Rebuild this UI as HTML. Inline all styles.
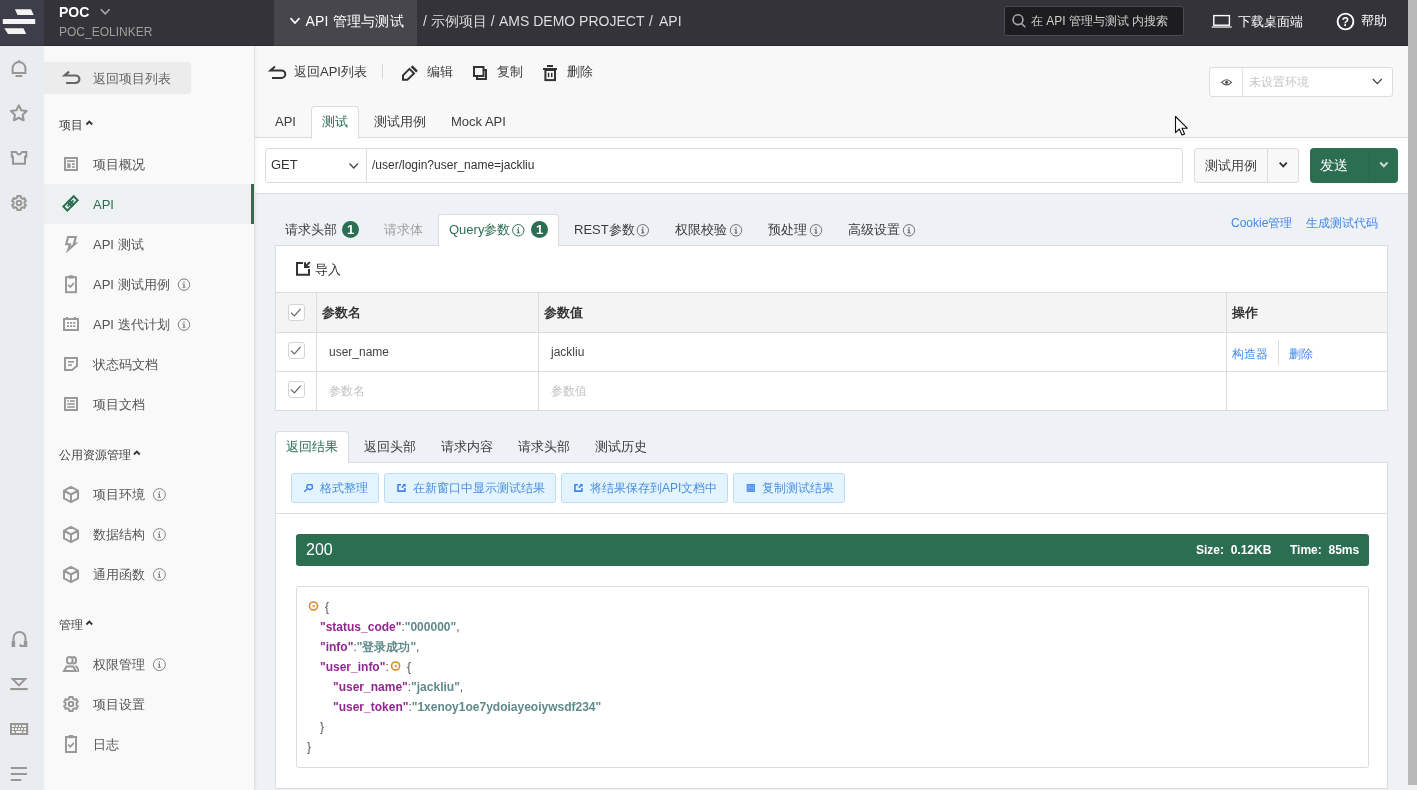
<!DOCTYPE html>
<html><head><meta charset="utf-8">
<style>
*{box-sizing:border-box;margin:0;padding:0}
html,body{width:1417px;height:790px;overflow:hidden;background:#eef1f5}
body{will-change:transform;font-family:"Liberation Sans",sans-serif;color:#333;position:relative;font-size:14px}
.a{position:absolute;white-space:nowrap}
.t{position:absolute;white-space:nowrap;line-height:20px;height:20px}
svg{position:absolute;overflow:visible}
/* top bar */
#top{left:0;top:0;width:1408px;height:46px;background:#34333a;border-bottom:1px solid #2b2a30}
#logo{left:0;top:0;width:44px;height:46px;background:#3e3e4a;border-bottom:1px solid #33333d}
#mod{left:274px;top:0;width:143px;height:46px;background:#47464c;border-bottom:1px solid #3a393e}
#search{left:1004px;top:6px;width:180px;height:30px;background:#1d1d20;border:1px solid #4b4a50;border-radius:3px}
/* rail + sidebar */
#rail{left:0;top:46px;width:44px;height:744px;background:#e9edf2}
#side{left:44px;top:46px;width:211px;height:744px;background:#f9f9f9;border-right:1px solid #e3e3e3}
#back{left:44px;top:62px;width:147px;height:32px;background:#ececec;border-radius:0 4px 4px 0}
#act{left:44px;top:184px;width:210px;height:40px;background:#eef1f1;border-right:3px solid #24754f}
.si{font-size:13px;color:#555;left:93px}
.sh{font-size:12px;color:#444;left:59px}
/* main */
#mtop{left:255px;top:46px;width:1153px;height:92px;background:#f8f8f8;border-bottom:1px solid #dcdcdc}
#murl{left:255px;top:138px;width:1153px;height:56px;background:#fff;border-bottom:1px solid #d9dcdf}
#sb{left:1408px;top:0;width:9px;height:785px;background:#bab9b9}
#sbt{left:1408px;top:785px;width:9px;height:5px;background:#f1f1f1}
.tb{font-size:13px;color:#3c3c3c}
.box{border:1px solid #dcdcdc;background:#fff}
.lnk{font-size:12px;color:#4289ea}
.th{font-size:13px;font-weight:bold;color:#333}
.td{font-size:12px;color:#444}
.ph{font-size:12px;color:#c4c4c4}
.cb{width:17px;height:17px;border:1px solid #d4d4d4;border-radius:3px;background:#fff}
.bb{height:30px;top:473px;background:#e3f4fe;border:1px solid #bcdcfa;border-radius:3px;font-size:12px;color:#4a90e2;line-height:28px}
.j{font-size:12px;font-weight:bold;line-height:20px;height:20px}
.k{color:#92278f}.s{color:#5f8a8b}.p{color:#555;font-weight:normal}
.badge{width:17px;height:17px;border-radius:9px;background:#2b6e51;color:#fff;font-size:13px;font-weight:bold;text-align:center;line-height:17px}
</style></head><body>
<!-- TOP BAR -->
<div class="a" id="top"></div>
<div class="a" id="logo"></div>
<div class="a" id="mod"></div>
<div class="t" style="left:59px;top:2px;font-size:14px;font-weight:bold;color:#fff">POC</div>
<div class="t" style="left:59px;top:22px;font-size:12px;color:#a29f9b">POC_EOLINKER</div>
<div class="t" style="left:305.5px;top:11px;font-size:14px;letter-spacing:.2px;color:#fff">API 管理与测试</div>
<div class="t" style="left:423px;top:11px;font-size:14px;color:#dedede">/ 示例项目 /</div>
<div class="t" style="left:499px;top:11px;font-size:14px;color:#dedede">AMS DEMO PROJECT</div>
<div class="t" style="left:649px;top:11px;font-size:14px;color:#dedede">/</div>
<div class="t" style="left:659px;top:11px;font-size:14px;color:#dedede">API</div>
<div class="a" id="search"></div>
<div class="t" style="left:1031px;top:11px;font-size:12px;color:#cfcfcf">在 API 管理与测试 内搜索</div>
<div class="t" style="left:1238px;top:12px;font-size:13px;color:#fff">下载桌面端</div>
<div class="t" style="left:1361px;top:11px;font-size:13px;color:#fff">帮助</div>
<!-- RAIL / SIDEBAR -->
<div class="a" id="rail"></div>
<div class="a" id="side"></div>
<div class="a" id="back"></div>
<div class="t" style="left:93px;top:69px;font-size:13px;color:#666">返回项目列表</div>
<div class="a" id="act"></div>
<div class="t sh" style="top:115px">项目</div>
<div class="t si" style="top:155px">项目概况</div>
<div class="t si" style="top:195px;color:#2b6e51">API</div>
<div class="t si" style="top:235px">API 测试</div>
<div class="t si" style="top:275px">API 测试用例</div>
<div class="t si" style="top:315px">API 迭代计划</div>
<div class="t si" style="top:355px">状态码文档</div>
<div class="t si" style="top:395px">项目文档</div>
<div class="t sh" style="top:445px">公用资源管理</div>
<div class="t si" style="top:485px">项目环境</div>
<div class="t si" style="top:525px">数据结构</div>
<div class="t si" style="top:565px">通用函数</div>
<div class="t sh" style="top:615px">管理</div>
<div class="t si" style="top:655px">权限管理</div>
<div class="t si" style="top:695px">项目设置</div>
<div class="t si" style="top:735px">日志</div>
<!-- MAIN TOP -->
<div class="a" style="left:255px;top:46px;width:4px;height:744px;background:linear-gradient(to right,rgba(0,0,0,.035),rgba(0,0,0,0));z-index:4"></div>
<div class="a" id="mtop"></div>
<div class="a" id="murl"></div>
<div class="t tb" style="left:294px;top:62px">返回API列表</div>
<div class="a" style="left:382px;top:64px;width:1px;height:15px;background:#d8d8d8"></div>
<div class="t tb" style="left:427px;top:62px">编辑</div>
<div class="t tb" style="left:497px;top:62px">复制</div>
<div class="t tb" style="left:567px;top:62px">删除</div>
<div class="a box" style="left:1209px;top:67px;width:184px;height:30px;border-radius:3px"></div>
<div class="a" style="left:1242px;top:68px;width:1px;height:28px;background:#e4e4e4"></div>
<div class="t" style="left:1249px;top:72px;font-size:12px;color:#c6c6c6">未设置环境</div>
<!-- tabs -->
<div class="a box" style="left:311px;top:106px;width:48px;height:33px;border-bottom:none;border-radius:4px 4px 0 0"></div>
<div class="t tb" style="left:275px;top:112px">API</div>
<div class="t tb" style="left:322px;top:112px;color:#2b6e51">测试</div>
<div class="t tb" style="left:374px;top:112px">测试用例</div>
<div class="t tb" style="left:451px;top:112px">Mock API</div>
<!-- url row -->
<div class="a box" style="left:265px;top:148px;width:918px;height:35px;border-radius:3px"></div>
<div class="a" style="left:366px;top:149px;width:1px;height:33px;background:#dcdcdc"></div>
<div class="t" style="left:271px;top:155px;font-size:13px;color:#333">GET</div>
<div class="t" style="left:372px;top:155px;font-size:12px;color:#333">/user/login?user_name=jackliu</div>
<div class="a box" style="left:1194px;top:148px;width:105px;height:35px;border-radius:3px;background:#f8f8f8"></div>
<div class="a" style="left:1267px;top:149px;width:1px;height:33px;background:#dcdcdc"></div>
<div class="t tb" style="left:1205px;top:156px;font-size:13px">测试用例</div>
<div class="a" style="left:1310px;top:148px;width:88px;height:35px;border-radius:4px;background:#2b6e51"></div>
<div class="a" style="left:1368px;top:148px;width:1px;height:35px;background:#2a6a4e"></div>
<div class="t" style="left:1320px;top:155px;font-size:14px;color:#fff">发送</div>
<!-- request tabs -->
<div class="a box" style="left:275px;top:245px;width:1113px;height:166px"></div>
<div class="a box" style="left:438px;top:214px;width:121px;height:32px;border-bottom:none;border-radius:4px 4px 0 0"></div>
<div class="t tb" style="left:285px;top:220px">请求头部</div>
<div class="a badge" style="left:342px;top:221px">1</div>
<div class="t tb" style="left:384px;top:220px;color:#a0a0a0">请求体</div>
<div class="t tb" style="left:449px;top:220px;color:#2b6e51">Query参数</div>
<div class="a badge" style="left:531px;top:221px">1</div>
<div class="t tb" style="left:574px;top:220px">REST参数</div>
<div class="t tb" style="left:675px;top:220px">权限校验</div>
<div class="t tb" style="left:768px;top:220px">预处理</div>
<div class="t tb" style="left:848px;top:220px">高级设置</div>
<div class="t lnk" style="left:1231px;top:213px">Cookie管理</div>
<div class="t lnk" style="left:1306px;top:213px">生成测试代码</div>
<div class="t" style="left:315px;top:260px;font-size:13px;color:#333">导入</div>
<!-- table -->
<div class="a" style="left:276px;top:292px;width:1111px;height:41px;background:#f4f4f4;border-top:1px solid #dcdcdc;border-bottom:1px solid #dcdcdc"></div>
<div class="a" style="left:276px;top:371px;width:1111px;height:1px;background:#dcdcdc"></div>
<div class="a" style="left:316px;top:293px;width:1px;height:117px;background:#dcdcdc"></div>
<div class="a" style="left:538px;top:293px;width:1px;height:117px;background:#dcdcdc"></div>
<div class="a" style="left:1226px;top:293px;width:1px;height:117px;background:#dcdcdc"></div>
<div class="t th" style="left:322px;top:303px">参数名</div>
<div class="t th" style="left:544px;top:303px">参数值</div>
<div class="t th" style="left:1232px;top:303px">操作</div>
<div class="t td" style="left:329px;top:342px">user_name</div>
<div class="t td" style="left:551px;top:342px">jackliu</div>
<div class="t lnk" style="left:1232px;top:344px">构造器</div>
<div class="a" style="left:1278px;top:340px;width:1px;height:25px;background:#dcdcdc"></div>
<div class="t lnk" style="left:1289px;top:344px">删除</div>
<div class="t ph" style="left:329px;top:381px">参数名</div>
<div class="t ph" style="left:551px;top:381px">参数值</div>
<div class="a cb" style="left:288px;top:304px"></div>
<div class="a cb" style="left:288px;top:342px"></div>
<div class="a cb" style="left:288px;top:381px"></div>
<!-- response -->
<div class="a box" style="left:275px;top:462px;width:1113px;height:327px"></div>
<div class="a box" style="left:275px;top:431px;width:74px;height:32px;border-bottom:none;border-radius:4px 4px 0 0"></div>
<div class="t tb" style="left:286px;top:437px;color:#2b6e51">返回结果</div>
<div class="t tb" style="left:364px;top:437px">返回头部</div>
<div class="t tb" style="left:441px;top:437px">请求内容</div>
<div class="t tb" style="left:518px;top:437px">请求头部</div>
<div class="t tb" style="left:595px;top:437px">测试历史</div>
<div class="a bb" style="left:291px;width:88px;padding-left:28px">格式整理</div>
<div class="a bb" style="left:384px;width:172px;padding-left:28px">在新窗口中显示测试结果</div>
<div class="a bb" style="left:561px;width:167px;padding-left:28px">将结果保存到API文档中</div>
<div class="a bb" style="left:733px;width:112px;padding-left:28px">复制测试结果</div>
<div class="a" style="left:276px;top:513px;width:1111px;height:1px;background:#dcdcdc"></div>
<div class="a" style="left:296px;top:534px;width:1073px;height:32px;background:#2b6e51;border-radius:3px"></div>
<div class="t" style="left:306px;top:540px;font-size:16px;color:#fff">200</div>
<div class="t" style="left:1196px;top:540px;font-size:12px;font-weight:bold;color:#fff">Size:&nbsp; 0.12KB</div>
<div class="t" style="left:1290px;top:540px;font-size:12px;font-weight:bold;color:#fff">Time:&nbsp; 85ms</div>
<div class="a box" style="left:296px;top:586px;width:1073px;height:182px;border-radius:3px"></div>
<div class="a j p" style="left:325px;top:597px">{</div>
<div class="a j" style="left:320px;top:617px"><span class="k">"status_code"</span><span class="p">:</span><span class="s">"000000"</span><span class="p">,</span></div>
<div class="a j" style="left:320px;top:637px"><span class="k">"info"</span><span class="p">:</span><span class="s">"登录成功"</span><span class="p">,</span></div>
<div class="a j" style="left:320px;top:657px"><span class="k">"user_info"</span><span class="p">:</span></div>
<div class="a j p" style="left:407px;top:657px">{</div>
<div class="a j" style="left:333px;top:677px"><span class="k">"user_name"</span><span class="p">:</span><span class="s">"jackliu"</span><span class="p">,</span></div>
<div class="a j" style="left:333px;top:697px"><span class="k">"user_token"</span><span class="p">:</span><span class="s">"1xenoy1oe7ydoiayeoiywsdf234"</span></div>
<div class="a j p" style="left:320px;top:717px">}</div>
<div class="a j p" style="left:307px;top:737px">}</div>
<svg class="a" style="left:0;top:0;z-index:5" width="1417" height="790" viewBox="0 0 1417 790">
<path d="M14.9,9.2 H31 L33.7,14.9 H17.5Z M2.8,18.9 H35.2 V24.1 H2.8Z M4.3,28.3 H23.5 L26.2,34 H8Z" fill="#f3f3f3"/>
<path d="M100.8,9.2 L105.2,13.8 L109.6,9.2" fill="none" stroke="#aaa" stroke-width="1.6"/>
<path d="M290.5,18.2 L295,23 L299.5,18.2" fill="none" stroke="#fff" stroke-width="1.7"/>
<circle cx="1018" cy="19.7" r="4.9" fill="none" stroke="#aaa" stroke-width="1.6"/><path d="M1021.5,23.5 L1025.3,27.2" stroke="#aaa" stroke-width="1.6"/>
<rect x="1213.8" y="15.6" width="15.6" height="9.6" fill="none" stroke="#fff" stroke-width="1.4"/><rect x="1211.7" y="26.4" width="20" height="1.2" fill="#fff"/>
<circle cx="1345.5" cy="21.5" r="7.9" fill="none" stroke="#fff" stroke-width="1.9"/>
<path d="M12.6,73 V68.4 A6.35,6.4 0 0 1 25.4,68.4 V73 Z M19,60.2 V62 M15.5,76 H22.2" fill="none" stroke="#9a9793" stroke-width="2"/>
<path d="M18.80,105.40 L16.39,110.28 L11.00,111.07 L14.90,114.87 L13.98,120.23 L18.80,117.70 L23.62,120.23 L22.70,114.87 L26.60,111.07 L21.21,110.28Z" fill="none" stroke="#9a9793" stroke-width="2.1" stroke-linejoin="round"/>
<path d="M11.8,152 H16 Q19,156.8 22,152 H26.3 V156.7 H25 V163.8 H13 V156.7 H11.8 Z" fill="none" stroke="#9a9793" stroke-width="2"/>
<path d="M20.64,195.99 L17.36,195.99 L17.16,197.71 L15.34,198.76 L13.75,198.07 L12.11,200.92 L13.50,201.95 L13.50,204.05 L12.11,205.08 L13.75,207.93 L15.34,207.24 L17.16,208.29 L17.36,210.01 L20.64,210.01 L20.84,208.29 L22.66,207.24 L24.25,207.93 L25.89,205.08 L24.50,204.05 L24.50,201.95 L25.89,200.92 L24.25,198.07 L22.66,198.76 L20.84,197.71Z" fill="none" stroke="#9a9793" stroke-width="2" stroke-linejoin="round"/><circle cx="19" cy="203" r="2.3" fill="none" stroke="#9a9793" stroke-width="2"/>
<path d="M13.5,641.5 V638 A6,6 0 0 1 25.5,638 V641.5" fill="none" stroke="#9a9793" stroke-width="2"/><rect x="11.6" y="641" width="3.6" height="6" fill="#9a9793"/><rect x="23.8" y="641" width="3.5" height="6" fill="#9a9793"/><rect x="19.7" y="645" width="5" height="2" fill="#9a9793"/><rect x="19.7" y="643.8" width="1.5" height="2" fill="#9a9793"/>
<path d="M10.2,678 H27.7 L18.95,686.7Z M15,680 H22.9 L18.95,683.9Z" fill="#9a9793" fill-rule="evenodd"/><rect x="10.2" y="688" width="17.5" height="2.1" fill="#9a9793"/>
<rect x="10" y="723" width="18.2" height="12" fill="#9a9793"/><rect x="12" y="725" width="2.5" height="2" fill="#eef1f6"/><rect x="15.8" y="725" width="2" height="2" fill="#eef1f6"/><rect x="19" y="725" width="2" height="2" fill="#eef1f6"/><rect x="22.3" y="725" width="3.7" height="2" fill="#eef1f6"/><rect x="12" y="728" width="2" height="2" fill="#eef1f6"/><rect x="15" y="728" width="2" height="2" fill="#eef1f6"/><rect x="18" y="728" width="2" height="2" fill="#eef1f6"/><rect x="21" y="728" width="2" height="2" fill="#eef1f6"/><rect x="24" y="728" width="2" height="2" fill="#eef1f6"/><rect x="12" y="731" width="2.5" height="2" fill="#eef1f6"/><rect x="16" y="731" width="6" height="2" fill="#eef1f6"/><rect x="23.3" y="731" width="2.7" height="2" fill="#eef1f6"/>
<rect x="10.8" y="767" width="16.2" height="2" fill="#9a9793"/><rect x="10.8" y="773" width="16.2" height="2" fill="#9a9793"/><rect x="10.8" y="779" width="10.5" height="2" fill="#9a9793"/>
<path d="M69.1,71.6 L64.6,75.5 H75.5 A3.9,3.75 0 0 1 75.5,83 H66.1" fill="none" stroke="#666" stroke-width="2.2"/>
<path d="M86.4,124.5 l2.9,-2.9 l2.9,2.9" fill="none" stroke="#333" stroke-width="1.8"/>
<path d="M133.9,454.5 l2.9,-2.9 l2.9,2.9" fill="none" stroke="#333" stroke-width="1.8"/>
<path d="M86.4,624.5 l2.9,-2.9 l2.9,2.9" fill="none" stroke="#333" stroke-width="1.8"/>
<rect x="65" y="158" width="12" height="12" fill="none" stroke="#999" stroke-width="2"/><rect x="67.2" y="160.2" width="7.6" height="1.7" fill="#999"/><rect x="67.2" y="163.3" width="3.4" height="4.6" fill="#999"/><rect x="72" y="163.3" width="2.8" height="1.7" fill="#999"/><rect x="72" y="166.2" width="2.8" height="1.7" fill="#999"/>
<g transform="translate(70.5,203.4) rotate(-45)" fill="none" stroke="#2b6e51" stroke-width="2"><rect x="-7.3" y="-2.8" width="8.4" height="5.6"/><rect x="-1.1" y="-2.8" width="8.4" height="5.6"/><rect x="-3.6" y="-0.3" width="7.2" height="0.6" stroke-width="1.2"/></g>
<path d="M67.3,236 H77.2 L75.6,242.6 H78.2 L66,253.2 L68.6,245.2 H64.8Z M69,238 L67.6,243.2 H71.4 L70.6,246 L72.6,244.4 L74.4,238Z" fill="#999" fill-rule="evenodd"/>
<rect x="66" y="277.2" width="10" height="15" fill="none" stroke="#999" stroke-width="2"/><rect x="68.5" y="275.2" width="5" height="3.2" rx="1" fill="#999"/><path d="M68.2,284.8 l2.1,2.1 l3.6,-3.7" fill="none" stroke="#999" stroke-width="1.8"/>
<rect x="64" y="319" width="14" height="11" fill="none" stroke="#999" stroke-width="2"/><rect x="66" y="317" width="2" height="1.5" fill="#999"/><rect x="74" y="317" width="2" height="1.5" fill="#999"/><rect x="67" y="322" width="2" height="1.8" fill="#999"/><rect x="67" y="325.2" width="2" height="1.8" fill="#999"/><rect x="70.1" y="322" width="2" height="1.8" fill="#999"/><rect x="70.1" y="325.2" width="2" height="1.8" fill="#999"/><rect x="73.2" y="322" width="2" height="1.8" fill="#999"/><rect x="73.2" y="325.2" width="2" height="1.8" fill="#999"/>
<path d="M65,358 H77 V365.8 L72.2,370 H65 Z" fill="none" stroke="#999" stroke-width="2"/><rect x="68" y="361" width="6" height="1.6" fill="#999"/><rect x="68" y="364.3" width="4" height="1.6" fill="#999"/>
<rect x="65" y="398" width="12" height="12" fill="none" stroke="#999" stroke-width="2"/><rect x="67.2" y="400.2" width="1.6" height="1.6" fill="#999"/><rect x="70" y="400.2" width="4.8" height="1.6" fill="#999"/><rect x="67.2" y="403.2" width="7.6" height="1.6" fill="#999"/><rect x="67.2" y="406.2" width="7.6" height="1.6" fill="#999"/>
<path d="M71,486.9 L78,490.7 V498.3 L71,502.1 L64,498.3 V490.7 Z M64,490.7 L71,494.5 L78,490.7 M71,494.5 V502.1" fill="none" stroke="#999" stroke-width="2" stroke-linejoin="round"/>
<path d="M71,526.9 L78,530.7 V538.3 L71,542.1 L64,538.3 V530.7 Z M64,530.7 L71,534.5 L78,530.7 M71,534.5 V542.1" fill="none" stroke="#999" stroke-width="2" stroke-linejoin="round"/>
<path d="M71,566.9 L78,570.7 V578.3 L71,582.1 L64,578.3 V570.7 Z M64,570.7 L71,574.5 L78,570.7 M71,574.5 V582.1" fill="none" stroke="#999" stroke-width="2" stroke-linejoin="round"/>
<rect x="67" y="657" width="5.6" height="6.6" rx="2.6" fill="none" stroke="#999" stroke-width="2"/><path d="M72.5,657 H73.4 A2.6,2.6 0 0 1 76,659.6 V661 A2.6,2.6 0 0 1 73.4,663.6 H72.5" fill="none" stroke="#999" stroke-width="2"/><path d="M64,671 L66.6,666.4 H73.2 L75.8,671 Z" fill="none" stroke="#999" stroke-width="2"/><path d="M75.2,666.2 Q78.3,667.2 78.3,672" fill="none" stroke="#999" stroke-width="1.8"/>
<path d="M72.64,696.99 L69.36,696.99 L69.16,698.71 L67.34,699.76 L65.75,699.07 L64.11,701.92 L65.50,702.95 L65.50,705.05 L64.11,706.08 L65.75,708.93 L67.34,708.24 L69.16,709.29 L69.36,711.01 L72.64,711.01 L72.84,709.29 L74.66,708.24 L76.25,708.93 L77.89,706.08 L76.50,705.05 L76.50,702.95 L77.89,701.92 L76.25,699.07 L74.66,699.76 L72.84,698.71Z" fill="none" stroke="#999" stroke-width="2" stroke-linejoin="round"/><circle cx="71" cy="704" r="2.3" fill="none" stroke="#999" stroke-width="2"/>
<rect x="66" y="737" width="10" height="15" fill="none" stroke="#999" stroke-width="2"/><rect x="68.5" y="735" width="5" height="3.2" rx="1" fill="#999"/><path d="M68.2,744.6 l2.1,2.1 l3.6,-3.7" fill="none" stroke="#999" stroke-width="1.8"/>
<circle cx="184.0" cy="284.6" r="5.7" fill="none" stroke="#777" stroke-width="1"/><rect x="183.4" y="281.4" width="1.2" height="1.3" fill="#777"/><rect x="183.4" y="283.6" width="1.2" height="3.6" fill="#777"/><rect x="182.5" y="283.6" width="1.1" height="0.9" fill="#777"/><rect x="182.5" y="286.8" width="3" height="0.9" fill="#777"/>
<circle cx="184.0" cy="324.6" r="5.7" fill="none" stroke="#777" stroke-width="1"/><rect x="183.4" y="321.4" width="1.2" height="1.3" fill="#777"/><rect x="183.4" y="323.6" width="1.2" height="3.6" fill="#777"/><rect x="182.5" y="323.6" width="1.1" height="0.9" fill="#777"/><rect x="182.5" y="326.8" width="3" height="0.9" fill="#777"/>
<circle cx="159.4" cy="494.6" r="6" fill="none" stroke="#848484" stroke-width="1"/><rect x="158.8" y="491.4" width="1.2" height="1.3" fill="#777"/><rect x="158.8" y="493.6" width="1.2" height="3.6" fill="#777"/><rect x="157.9" y="493.6" width="1.1" height="0.9" fill="#777"/><rect x="157.9" y="496.8" width="3" height="0.9" fill="#777"/>
<circle cx="159.4" cy="534.6" r="6" fill="none" stroke="#848484" stroke-width="1"/><rect x="158.8" y="531.4" width="1.2" height="1.3" fill="#777"/><rect x="158.8" y="533.6" width="1.2" height="3.6" fill="#777"/><rect x="157.9" y="533.6" width="1.1" height="0.9" fill="#777"/><rect x="157.9" y="536.8" width="3" height="0.9" fill="#777"/>
<circle cx="159.4" cy="574.6" r="6" fill="none" stroke="#848484" stroke-width="1"/><rect x="158.8" y="571.4" width="1.2" height="1.3" fill="#777"/><rect x="158.8" y="573.6" width="1.2" height="3.6" fill="#777"/><rect x="157.9" y="573.6" width="1.1" height="0.9" fill="#777"/><rect x="157.9" y="576.8" width="3" height="0.9" fill="#777"/>
<circle cx="159.4" cy="664.6" r="6" fill="none" stroke="#848484" stroke-width="1"/><rect x="158.8" y="661.4" width="1.2" height="1.3" fill="#777"/><rect x="158.8" y="663.6" width="1.2" height="3.6" fill="#777"/><rect x="157.9" y="663.6" width="1.1" height="0.9" fill="#777"/><rect x="157.9" y="666.8" width="3" height="0.9" fill="#777"/>
<path d="M275,66.5 L270.5,70.4 H281.4 A3.9,3.75 0 0 1 281.4,77.9 H272" fill="none" stroke="#333" stroke-width="2"/>
<path d="M403,79.7 V75.3 L409.5,68.9 L414,73.5 L407.4,79.7 Z" fill="none" stroke="#333" stroke-width="2"/><path d="M411.6,66.2 L417,71.6" stroke="#333" stroke-width="2.5"/>
<rect x="477" y="70" width="9" height="9" fill="none" stroke="#333" stroke-width="2"/><rect x="474" y="67" width="9.5" height="9" fill="#f8f8f8" stroke="#333" stroke-width="2"/>
<rect x="543" y="68" width="14" height="2" fill="#333"/><rect x="547" y="65" width="6" height="2" fill="#333"/><rect x="545.4" y="70" width="9.6" height="10.1" fill="none" stroke="#333" stroke-width="2"/><rect x="547.8" y="72.8" width="1.5" height="4.4" fill="#333"/><rect x="551" y="72.8" width="1.5" height="4.4" fill="#333"/>
<path d="M1221.7,82.3 Q1226.6,77.2 1231.5,82.3 Q1226.6,87.4 1221.7,82.3Z" fill="none" stroke="#555" stroke-width="1.2"/><circle cx="1226.6" cy="82.3" r="1.6" fill="#555"/>
<path d="M1372.8,79 L1377.3,83.6 L1381.8,79" fill="none" stroke="#444" stroke-width="1.3"/>
<path d="M349.5,163.5 L353.75,168 L358,163.5" fill="none" stroke="#444" stroke-width="1.25"/>
<path d="M1279.7,162.7 L1283.25,166.4 L1286.8,162.7" fill="none" stroke="#333" stroke-width="1.9"/>
<path d="M1380.2,162.5 L1383.85,166.3 L1387.5,162.5" fill="none" stroke="#d0d8d4" stroke-width="2"/>
<circle cx="518.3" cy="230.3" r="5.7" fill="none" stroke="#2b6e51" stroke-width="1"/><rect x="517.7" y="227.1" width="1.2" height="1.3" fill="#2b6e51"/><rect x="517.7" y="229.3" width="1.2" height="3.6" fill="#2b6e51"/><rect x="516.8" y="229.3" width="1.1" height="0.9" fill="#2b6e51"/><rect x="516.8" y="232.5" width="3" height="0.9" fill="#2b6e51"/>
<circle cx="642.8" cy="230.3" r="5.7" fill="none" stroke="#6a6a6a" stroke-width="0.95"/><rect x="642.2" y="227.1" width="1.2" height="1.3" fill="#555"/><rect x="642.2" y="229.3" width="1.2" height="3.6" fill="#555"/><rect x="641.3" y="229.3" width="1.1" height="0.9" fill="#555"/><rect x="641.3" y="232.5" width="3" height="0.9" fill="#555"/>
<circle cx="736.0" cy="230.3" r="5.7" fill="none" stroke="#6a6a6a" stroke-width="0.95"/><rect x="735.4" y="227.1" width="1.2" height="1.3" fill="#555"/><rect x="735.4" y="229.3" width="1.2" height="3.6" fill="#555"/><rect x="734.5" y="229.3" width="1.1" height="0.9" fill="#555"/><rect x="734.5" y="232.5" width="3" height="0.9" fill="#555"/>
<circle cx="816.0" cy="230.3" r="5.7" fill="none" stroke="#6a6a6a" stroke-width="0.95"/><rect x="815.4" y="227.1" width="1.2" height="1.3" fill="#555"/><rect x="815.4" y="229.3" width="1.2" height="3.6" fill="#555"/><rect x="814.5" y="229.3" width="1.1" height="0.9" fill="#555"/><rect x="814.5" y="232.5" width="3" height="0.9" fill="#555"/>
<circle cx="909.0" cy="230.3" r="5.7" fill="none" stroke="#6a6a6a" stroke-width="0.95"/><rect x="908.4" y="227.1" width="1.2" height="1.3" fill="#555"/><rect x="908.4" y="229.3" width="1.2" height="3.6" fill="#555"/><rect x="907.5" y="229.3" width="1.1" height="0.9" fill="#555"/><rect x="907.5" y="232.5" width="3" height="0.9" fill="#555"/>
<path d="M303,263 H297 V274.7 H309 V269" fill="none" stroke="#333" stroke-width="2"/><path d="M305,262.3 V266.9 H309.6" fill="none" stroke="#333" stroke-width="2"/><path d="M305.6,266.3 L309.9,262.1" stroke="#333" stroke-width="2"/>
<path d="M291,312.6 l3.4,3.3 l6.2,-7" fill="none" stroke="#666" stroke-width="1.25"/>
<path d="M291,350.6 l3.4,3.3 l6.2,-7" fill="none" stroke="#666" stroke-width="1.25"/>
<path d="M291,389.6 l3.4,3.3 l6.2,-7" fill="none" stroke="#666" stroke-width="1.25"/>
<path d="M307.6,484.6 L312,484.7 L312.5,488.2 L309.4,489.8 L306.6,487.3 Z" fill="none" stroke="#3f84e6" stroke-width="1.4" stroke-linejoin="round"/><path d="M307.3,488.7 L304.3,491.7" stroke="#3f84e6" stroke-width="1.6"/>
<path d="M401,484.8 H398 V491.1 H404.9 V488" fill="none" stroke="#3f84e6" stroke-width="1.6"/><path d="M402.4,484 H405.7 V486.9Z" fill="#3f84e6"/><path d="M401.7,487.7 L404.8,484.9" stroke="#3f84e6" stroke-width="1.6"/>
<path d="M578,484.8 H575 V491.1 H581.9 V488" fill="none" stroke="#3f84e6" stroke-width="1.6"/><path d="M579.4,484 H582.7 V486.9Z" fill="#3f84e6"/><path d="M578.7,487.7 L581.8,484.9" stroke="#3f84e6" stroke-width="1.6"/>
<rect x="747.2" y="484.6" width="7.2" height="6.8" fill="#74a9f2" stroke="#4389e9" stroke-width="1"/><rect x="748.6" y="489" width="4.2" height="0.9" fill="#4d8fea"/><rect x="750.8" y="486" width="1.8" height="0.9" fill="#4389e9"/>
<circle cx="313.5" cy="606" r="4" fill="none" stroke="#d98a2e" stroke-width="1.6"/><path d="M314.5,604.3 l-2.4,1.7 l2.4,1.7z" fill="#d98a2e"/>
<circle cx="395.6" cy="666" r="4" fill="none" stroke="#d98a2e" stroke-width="1.6"/><path d="M396.6,664.3 l-2.4,1.7 l2.4,1.7z" fill="#d98a2e"/>
<path d="M1175.5,116.5 V132.6 L1179.3,129 L1182,135 L1184.6,133.9 L1182,128.2 H1187.2Z" fill="#fff" stroke="#111" stroke-width="1.1" stroke-linejoin="round"/>
</svg>
<div class="t" style="left:1341.8px;top:11.5px;font-size:12px;font-weight:bold;color:#fff;z-index:6">?</div>
<!-- scrollbar -->
<div class="a" id="sb"></div>
<div class="a" id="sbt"></div>
</body></html>
